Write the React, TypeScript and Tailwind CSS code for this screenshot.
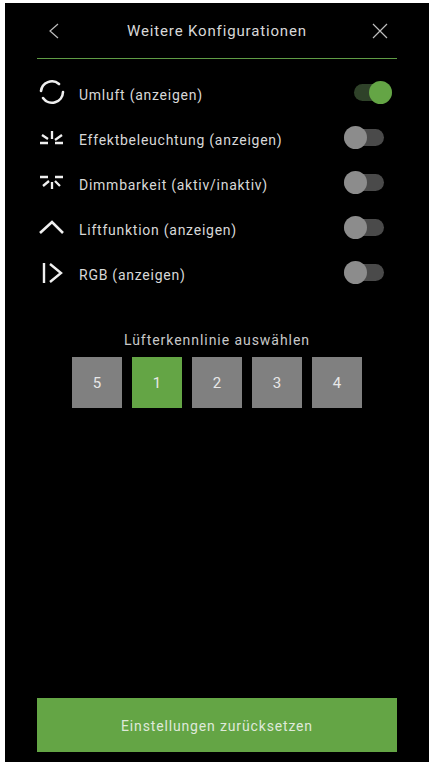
import React from "react";

const font = "font-['Roboto','Liberation_Sans',sans-serif]";

function SyncIcon() {
	return (
		<svg width="28" height="26" viewBox="0 0 28 26" fill="none" stroke="#efefef" strokeWidth="2.6" strokeLinecap="round">
			<path d="M4 11A11 11 0 0 1 22 4" />
			<path d="M26 12A11 11 0 0 1 6 18" />
		</svg>
	);
}

function BurstUpIcon() {
	return (
		<svg width="28" height="18" viewBox="0 0 28 18" fill="none" stroke="#efefef" strokeWidth="2.3">
			<path d="M15 2v8M3 14h8M18 14h8M5 6l6 4M25 6l-7 5" />
		</svg>
	);
}

function BurstDownIcon() {
	return (
		<svg width="28" height="18" viewBox="0 0 28 18" fill="none" stroke="#efefef" strokeWidth="2.3">
			<path d="M15 8v7M3 3h8M18 3h8M6 12l6-5M23 12l-5-5" />
		</svg>
	);
}

function LiftIcon() {
	return (
		<svg width="28" height="18" viewBox="0 0 28 18" fill="none" stroke="#efefef" strokeWidth="2.6">
			<path d="M3 14 15 3l11 11" />
		</svg>
	);
}

function RgbIcon() {
	return (
		<svg width="28" height="22" viewBox="0 0 28 22" fill="none" stroke="#efefef" strokeWidth="2.4">
			<path d="M7 1v20M13 2l11 9-11 9" />
		</svg>
	);
}

function Toggle({ on }: { on?: boolean }) {
	if (on) {
		return (
			<div className="relative w-[38px] h-[17px] mr-[5px] rounded-full bg-[#2f4229]">
				<div className="absolute right-0 top-[-3px] w-[23px] h-[23px] rounded-full bg-[#64a545]" />
			</div>
		);
	}
	return (
		<div className="relative w-[40px] h-[17px] mr-[13px] rounded-full bg-[#4a4a4a]">
			<div className="absolute left-0 top-[-3px] w-[23px] h-[23px] rounded-full bg-[#8c8c8c]" />
		</div>
	);
}

const rows = [
	{ icon: <SyncIcon />, label: "Umluft (anzeigen)", on: true },
	{ icon: <BurstUpIcon />, label: "Effektbeleuchtung (anzeigen)" },
	{ icon: <BurstDownIcon />, label: "Dimmbarkeit (aktiv/inaktiv)" },
	{ icon: <LiftIcon />, label: "Liftfunktion (anzeigen)" },
	{ icon: <RgbIcon />, label: "RGB (anzeigen)" },
];

export default function App() {
	return (
		<div className={`w-[429px] h-[762px] bg-white pl-[5px] pt-[3px] ${font}`}>
			<div className="w-[424px] h-[759px] bg-black flex flex-col px-8">
				{/* Header */}
				<div className="h-[56px] flex items-center justify-between border-b border-[#5f9c45] text-[#d8d8d8] pl-3 pr-2">
					<svg width="14" height="18" viewBox="0 0 14 18" fill="none" stroke="#bdbdbd" strokeWidth="1.2">
						<path d="M9 2 1 9l8 7" />
					</svg>
					<span className="pt-[2px] text-[15px] tracking-[0.85px]">Weitere Konfigurationen</span>
					<svg width="18" height="18" viewBox="0 0 18 18" fill="none" stroke="#bdbdbd" strokeWidth="1.2">
						<path d="m2 2 14 14M16 2 2 16" />
					</svg>
				</div>

				{/* Options */}
				<div className="mt-[11px] flex flex-col">
					{rows.map((row) => (
						<div key={row.label} className="h-[45px] flex items-center">
							<div className="w-[42px] flex items-center">{row.icon}</div>
							<span className="pt-[5px] text-[14px] tracking-[0.75px] text-[#d8d8d8]">{row.label}</span>
							<div className="ml-auto">
								<Toggle on={row.on} />
							</div>
						</div>
					))}
				</div>

				{/* Fan curve */}
				<div className="mt-[35px] flex flex-col items-center">
					<span className="text-[14px] tracking-[0.95px] text-[#c8c8c8]">Lüfterkennlinie auswählen</span>
					<div className="mt-[6px] flex gap-[10px]">
						{["5", "1", "2", "3", "4"].map((n) => (
							<div
								key={n}
								className={
									n === "1"
										? "w-[50px] h-[51px] pt-[1px] flex items-center justify-center text-[15px] text-[#e8e8e8] bg-[#64a545]"
										: "w-[50px] h-[51px] pt-[1px] flex items-center justify-center text-[15px] text-[#e8e8e8] bg-[#808080]"
								}
							>
								{n}
							</div>
						))}
					</div>
				</div>

				{/* Reset */}
				<div className="mt-auto mb-[10px] h-[54px] pt-[3px] flex items-center justify-center bg-[#64a545] text-[14px] tracking-[0.85px] text-[#dfe9da]">
					Einstellungen zurücksetzen
				</div>
			</div>
		</div>
	);
}
